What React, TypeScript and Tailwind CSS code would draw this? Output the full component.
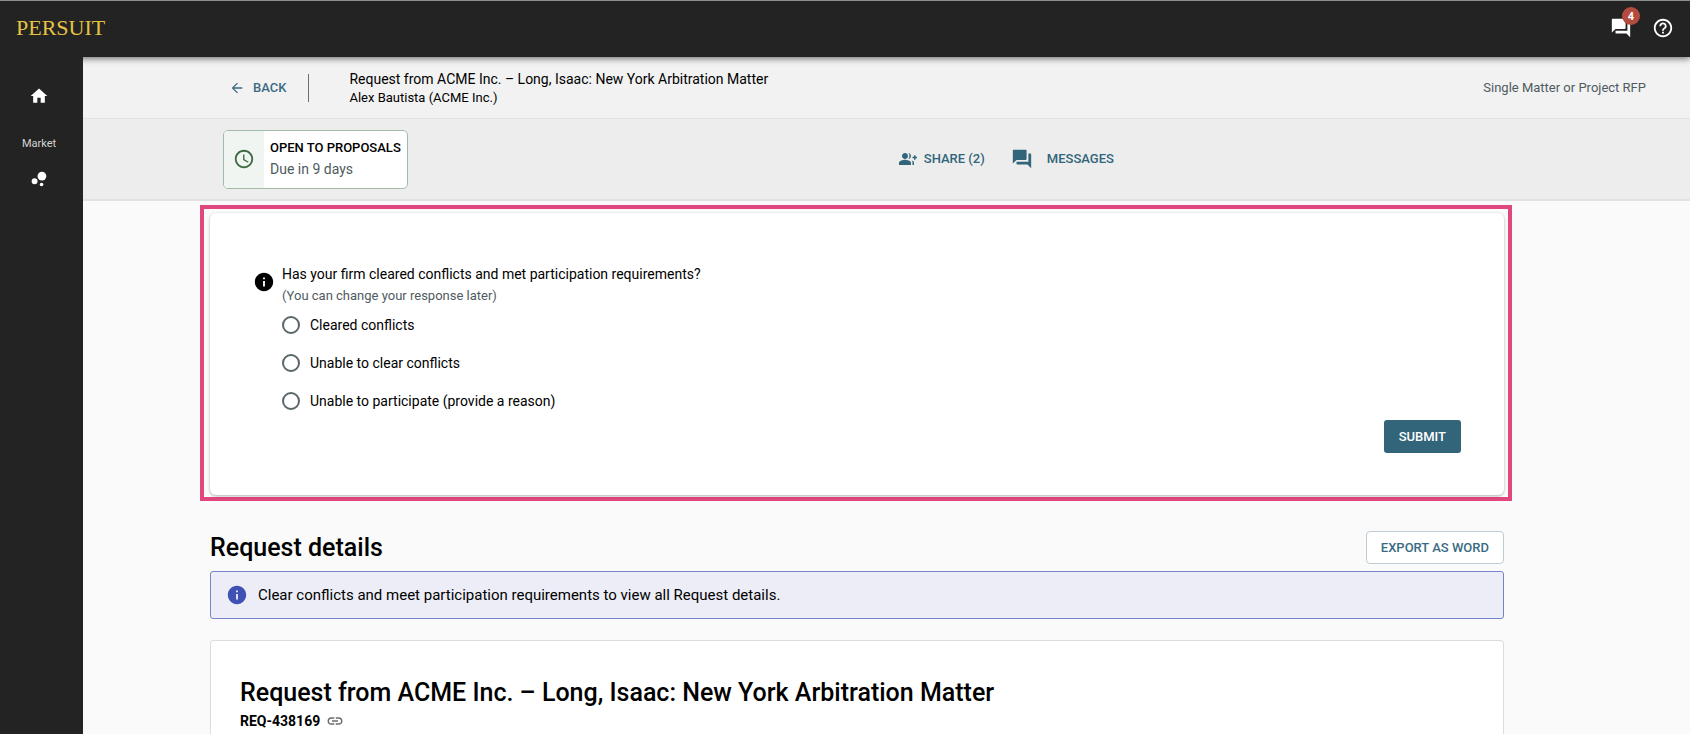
import {
  MdAccessTime,
  MdArrowBack,
  MdBubbleChart,
  MdForum,
  MdHelpOutline,
  MdHome,
  MdInfo,
  MdLink,
} from "react-icons/md";

const MATTER_TITLE = "Request from ACME Inc. – Long, Isaac: New York Arbitration Matter";

const RESPONSES = [
  { id: "cleared", label: "Cleared conflicts" },
  { id: "not-cleared", label: "Unable to clear conflicts" },
  { id: "not-participating", label: "Unable to participate (provide a reason)" },
];

function GroupAddIcon() {
  return (
    <svg viewBox="0 0 24 24" className="size-[18px]" fill="currentColor" aria-hidden="true">
      <path d="M22 9V7h-2v2h-2v2h2v2h2v-2h2V9z" />
      <path d="M8 12c2.21 0 4-1.79 4-4s-1.79-4-4-4-4 1.79-4 4 1.79 4 4 4zm0 1c-2.67 0-8 1.34-8 4v3h16v-3c0-2.66-5.33-4-8-4zm4.51-8.95C13.43 5.11 14 6.49 14 8s-.57 2.89-1.49 3.95C14.47 11.7 16 10.04 16 8s-1.53-3.7-3.49-3.95zm4.02 9.78C17.42 14.66 18 15.7 18 17v3h2v-3c0-1.45-1.59-2.51-3.47-3.17z" />
    </svg>
  );
}

function TopBar() {
  return (
    <header className="relative z-10 flex h-[57px] shrink-0 items-center justify-between border-t border-[#8a8f8c] bg-[#232323] px-4 pb-0.5 shadow-[0_2px_6px_rgba(0,0,0,0.5)]">
      <a href="#home" className="font-['Liberation_Serif',serif] text-[22px] leading-6 text-[#e5c243]">
        PERSUIT
      </a>
      <div className="flex items-center gap-5 text-white">
        <button type="button" aria-label="Messages" className="relative">
          <MdForum className="size-[22px]" />
          <span className="absolute -top-2.5 -right-2 flex size-[18px] items-center justify-center rounded-full bg-[#b34b3e] text-[11px] leading-none font-bold">
            4
          </span>
        </button>
        <button type="button" aria-label="Help">
          <MdHelpOutline className="size-[22px]" />
        </button>
      </div>
    </header>
  );
}

function Sidebar() {
  return (
    <nav className="relative z-20 flex w-[83px] shrink-0 flex-col items-center bg-[#232323] pt-[29px] pr-[5px] text-white">
      <a href="#home" aria-label="Home">
        <MdHome className="size-5" />
      </a>
      <span className="mt-[30px] text-[11px] leading-4 text-[#d4d4d4]">Market</span>
      <a href="#market" aria-label="Market" className="mt-4">
        <MdBubbleChart className="size-[22px]" />
      </a>
    </nav>
  );
}

function TitleBar() {
  return (
    <div className="flex h-[62px] items-center border-b border-[#e2e2e2] bg-[#f2f2f2] pr-11 pl-[146px]">
      <button type="button" className="flex items-center gap-2 text-[13px] font-medium text-[#3a6b83]">
        <MdArrowBack className="size-4" />
        BACK
      </button>
      <div className="ml-[22px] h-7 border-l border-[#6f6f6f]" />
      <div className="ml-10 text-black">
        <div className="text-sm leading-5">{MATTER_TITLE}</div>
        <div className="text-[13px] leading-[18px]">Alex Bautista (ACME Inc.)</div>
      </div>
      <div className="ml-auto text-[13px] text-[#4f5b60]">Single Matter or Project RFP</div>
    </div>
  );
}

function ActionBar() {
  return (
    <div className="flex h-[82px] items-center border-b-2 border-[#e2e2e2] bg-[#ededed] pl-[140px]">
      <div className="flex h-[59px] overflow-hidden rounded-[5px] border border-[#a3bba6] bg-white">
        <div className="flex w-10 items-center justify-center bg-[#f0f5f1] text-[#3f6b44]">
          <MdAccessTime className="size-[22px]" />
        </div>
        <div className="flex flex-col justify-center px-1.5">
          <div className="text-[13px] leading-5 font-medium text-black">OPEN TO PROPOSALS</div>
          <div className="text-sm leading-[22px] text-[#4f5b60]">Due in 9 days</div>
        </div>
      </div>
      <div className="ml-[491px] flex items-center text-[13px] font-medium text-[#31657b]">
        <button type="button" className="flex items-center gap-[7px]">
          <GroupAddIcon />
          SHARE (2)
        </button>
        <button type="button" className="ml-[26px] flex items-center gap-3.5">
          <MdForum className="size-[22px]" />
          MESSAGES
        </button>
      </div>
    </div>
  );
}

function ConflictForm() {
  return (
    <section className="border-4 border-[#e0477f] pt-1 pr-1 pb-0.5 pl-1.5">
      <form
        className="rounded-md bg-white pt-[50px] pr-[43px] pb-[42px] pl-[43px] shadow-[0_1px_3px_rgba(0,0,0,0.3)]"
        onSubmit={(e) => e.preventDefault()}
      >
        <fieldset className="flex gap-[7px]">
          <MdInfo className="mt-2 size-[22px] shrink-0 text-black" />
          <div>
            <legend className="text-sm leading-[22px] text-black">
              Has your firm cleared conflicts and met participation requirements?
            </legend>
            <p className="text-[13px] leading-[21px] text-[#4f5b60]">(You can change your response later)</p>
            <div className="flex flex-col">
              {RESPONSES.map(({ id, label }) => (
                <label key={id} htmlFor={id} className="flex h-[38px] items-center gap-2.5 text-sm text-black">
                  <input
                    id={id}
                    type="radio"
                    name="response"
                    className="size-[18px] appearance-none rounded-full border-2 border-[#5b666b] bg-white checked:border-[6px]"
                  />
                  {label}
                </label>
              ))}
            </div>
          </div>
        </fieldset>
        <div className="flex justify-end">
          <button type="submit" className="h-[33px] rounded-[3px] bg-[#32647a] px-[15px] text-[13px] font-medium text-white">
            SUBMIT
          </button>
        </div>
      </form>
    </section>
  );
}

export default function App() {
  return (
    <div className="flex min-h-screen flex-col bg-[#fafafa] font-[Roboto,sans-serif]">
      <TopBar />
      <div className="flex flex-1">
        <Sidebar />
        <div className="flex min-w-0 flex-1 flex-col">
          <TitleBar />
          <ActionBar />
          <main className="flex flex-1 flex-col pt-1 pr-[178px] pl-[117px]">
            <ConflictForm />
            <div className="flex flex-1 flex-col pr-2 pl-2.5">
              <div className="mt-[30px] flex items-center justify-between">
                <h1 className="text-[25px] leading-8 font-medium text-black">Request details</h1>
                <button
                  type="button"
                  className="h-[33px] rounded-[4px] border border-[#bccdd3] bg-white px-3.5 text-[13px] font-medium text-[#3a6b83]"
                >
                  EXPORT AS WORD
                </button>
              </div>
              <div
                role="status"
                className="mt-[7px] flex h-12 items-center gap-2.5 rounded-[3px] border border-[#7685c8] bg-[#ededf7] px-[15px] text-[15px] text-black"
              >
                <MdInfo className="size-[22px] text-[#3f51b5]" />
                Clear conflicts and meet participation requirements to view all Request details.
              </div>
              <section className="mt-[21px] flex-1 rounded-t-[4px] border border-b-0 border-[#dcdce0] bg-white px-[29px] pt-9">
                <h2 className="text-[25px] leading-8 font-medium text-black">{MATTER_TITLE}</h2>
                <div className="flex items-center gap-1.5 text-sm leading-6 font-bold text-black">
                  REQ-438169
                  <a href="#request" aria-label="Link to request" className="text-[#6b6b6b]">
                    <MdLink className="size-[18px]" />
                  </a>
                </div>
              </section>
            </div>
          </main>
        </div>
      </div>
    </div>
  );
}
